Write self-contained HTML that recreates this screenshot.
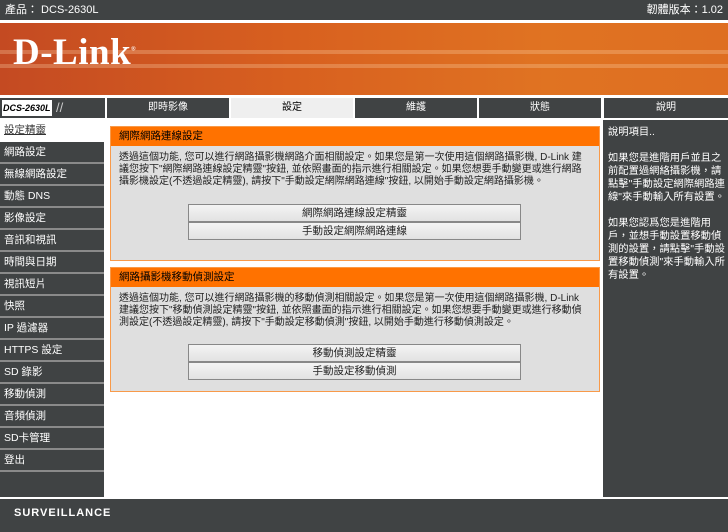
<!DOCTYPE html>
<html><head><meta charset="utf-8"><style>
*{margin:0;padding:0;box-sizing:border-box}
body{width:728px;height:532px;position:relative;background:#fff;font-family:"Liberation Sans","Noto Sans CJK TC",sans-serif;overflow:hidden}
.a{position:absolute}
#top{left:0;top:0;width:728px;height:20px;background:#404344;color:#fff;font-size:11px;line-height:20px}
#banner{left:0;top:23px;width:728px;height:72px;background:linear-gradient(90deg,#c44a22 0%,#d8601f 40%,#e07322 75%,#de6e22 100%);overflow:hidden}
.stripe{position:absolute;left:0;width:728px;height:4px;background:rgba(255,220,180,.28)}
#logo{left:13px;color:#fff;font-family:"Liberation Serif",serif;font-weight:bold;font-size:37px;letter-spacing:0.5px}
.tab{position:absolute;top:98px;height:20px;background:#404344;color:#fff;font-size:10px;line-height:20px;text-align:center}
#nav{left:0;top:120px;width:104px;height:377px;background:#404344}
.ni{height:22px;border-bottom:2px solid #8a8a8a;color:#fff;font-size:10.5px;line-height:20px;padding-left:4px}
.panel{position:absolute;left:110px;width:490px;background:#dfdfdf;border:1px solid #f89a4a}
.ph{background:#ff7200;height:19px;color:#000;font-size:10.5px;line-height:19px;padding-left:8px}
.pt{font-size:10px;line-height:12px;color:#222;padding:6px 14px 0 8px}
.btn{position:absolute;left:77px;width:333px;height:18px;border:1px solid #888;background:linear-gradient(#f4f4f4,#e2e2e2);font-size:10.5px;line-height:16px;text-align:center;color:#222}
#side{left:603px;top:120px;width:125px;height:377px;background:#404344;color:#fff;font-size:10.3px;line-height:13px;padding:6px 2px 6px 5px}
#foot{left:0;top:499px;width:728px;height:33px;background:#404344;color:#fff;font-size:11px;font-weight:bold;letter-spacing:1px;line-height:28px;padding-left:14px}
</style></head><body>
<div id="top" class="a"><span style="position:absolute;left:5px">產品： DCS-2630L</span><span style="position:absolute;right:5px">韌體版本：1.02</span></div>
<div id="banner" class="a">
<div class="stripe" style="top:27px"></div><div class="stripe" style="top:41px"></div>
<div id="logo" class="a" style="top:8px">D-Link<sup style="font-size:6px">®</sup></div>
</div>
<div class="a" style="left:0;top:98px;width:105px;height:20px;background:#404344"><div style="position:absolute;left:2px;top:2px;width:50px;height:16px;background:#fff;font-size:9px;font-style:italic;font-weight:bold;line-height:16px;padding-left:1px">DCS-2630L</div><div style="position:absolute;left:56px;top:2px;color:#ccc;font-size:13px;line-height:16px">//</div></div>
<div class="tab" style="left:107px;width:122px">即時影像</div>
<div class="tab" style="left:231px;width:122px;background:#efefef;color:#000">設定</div>
<div class="tab" style="left:355px;width:122px">維護</div>
<div class="tab" style="left:479px;width:122px">狀態</div>
<div class="tab" style="left:604px;width:124px">說明</div>
<div id="nav" class="a">
<div class="ni" style="background:#fff;color:#333;text-decoration:underline;border-bottom-color:#fff">設定精靈</div>
<div class="ni">網路設定</div><div class="ni">無線網路設定</div><div class="ni">動態 DNS</div><div class="ni">影像設定</div><div class="ni">音訊和視訊</div><div class="ni">時間與日期</div><div class="ni">視訊短片</div><div class="ni">快照</div><div class="ni">IP 過濾器</div><div class="ni">HTTPS 設定</div><div class="ni">SD 錄影</div><div class="ni">移動偵測</div><div class="ni">音頻偵測</div><div class="ni">SD卡管理</div><div class="ni">登出</div>
</div>
<div class="panel" style="top:126px;height:135px">
<div class="ph">網際網路連線設定</div>
<div class="pt">透過這個功能, 您可以進行網路攝影機網路介面相關設定。如果您是第一次使用這個網路攝影機, D-Link 建議您按下"網際網路連線設定精靈"按鈕, 並依照畫面的指示進行相關設定。如果您想要手動變更或進行網路攝影機設定(不透過設定精靈), 請按下"手動設定網際網路連線"按鈕, 以開始手動設定網路攝影機。</div>
<div class="btn" style="top:77px">網際網路連線設定精靈</div>
<div class="btn" style="top:95px">手動設定網際網路連線</div>
</div>
<div class="panel" style="top:267px;height:125px">
<div class="ph">網路攝影機移動偵測設定</div>
<div class="pt">透過這個功能, 您可以進行網路攝影機的移動偵測相關設定。如果您是第一次使用這個網路攝影機, D-Link 建議您按下"移動偵測設定精靈"按鈕, 並依照畫面的指示進行相關設定。如果您想要手動變更或進行移動偵測設定(不透過設定精靈), 請按下"手動設定移動偵測"按鈕, 以開始手動進行移動偵測設定。</div>
<div class="btn" style="top:76px">移動偵測設定精靈</div>
<div class="btn" style="top:94px">手動設定移動偵測</div>
</div>
<div id="side" class="a">說明項目..<br><br>如果您是進階用戶並且之前配置過網絡攝影機，請點擊"手動設定網際網路連線"來手動輸入所有設置。<br><br>如果您認爲您是進階用戶，並想手動設置移動偵測的設置，請點擊"手動設置移動偵測"來手動輸入所有設置。</div>
<div id="foot" class="a">SURVEILLANCE</div>
</body></html>
